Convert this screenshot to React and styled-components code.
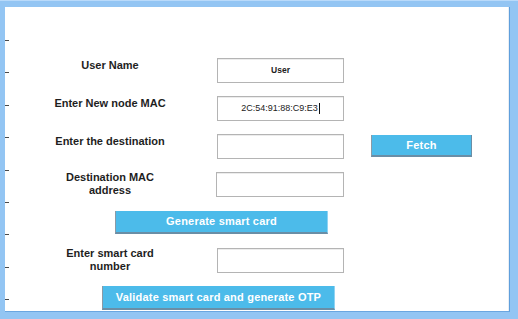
import React from "react";
import styled, { createGlobalStyle } from "styled-components";

const Global = createGlobalStyle`
  html, body { margin: 0; padding: 0; background: #ffffff; }
  body { font-family: "Liberation Sans", Arial, sans-serif; }
`;

const Frame = styled.div`
  width: 518px;
  height: 319px;
  box-sizing: border-box;
  background: #93c5f3;
  padding: 6px 8px 7px 5px;
  display: flex;
  border-top: 1px solid #b9dafa;
`;

const Panel = styled.div`
  flex: 1;
  background: #ffffff;
  display: flex;
  box-shadow: inset -1px 0 0 #e8eef5;
  border-right: 1px solid #5f9fdc;
  border-bottom: 1px solid #6aa6e0;
`;

const Ruler = styled.div`
  width: 4px;
  display: flex;
  flex-direction: column;
  gap: 31.4px;
  padding-top: 33px;
`;

const Tick = styled.span`
  display: block;
  height: 1px;
  width: 4px;
  background: #4a4a4a;
`;

const Form = styled.div`
  flex: 1;
  display: flex;
  flex-direction: column;
  gap: 12px;
  padding: 50px 0 0 21px;
`;

const Row = styled.div`
  display: grid;
  grid-template-columns: 160px 127px 101px;
  column-gap: 27px;
  height: 26px;
  align-items: center;
`;

const Label = styled.div`
  align-self: start;
  padding-top: ${(p) => (p.$multi ? "0" : "2px")};
  text-align: center;
  font-size: 11px;
  line-height: 13px;
  font-weight: bold;
  color: #1e1e1e;
`;

const Box = styled.div`
  height: 25px;
  box-sizing: border-box;
  border: 1px solid #b4b4b4;
  box-shadow: inset 0 1px 0 #ececec;
  background: #fff;
  display: flex;
  align-items: center;
  justify-content: center;
  font-size: ${(p) => (p.$bold ? "8.5px" : "9px")};
  font-weight: ${(p) => (p.$bold ? "bold" : "normal")};
  color: #222;
  margin-left: ${(p) => (p.$shift ? "-1px" : "0")};
`;

const Caret = styled.span`
  display: inline-block;
  width: 1px;
  height: 11px;
  background: #111;
  margin-left: 1px;
`;

const Button = styled.div`
  box-sizing: border-box;
  height: ${(p) => p.$h || 23}px;
  width: ${(p) => p.$w}px;
  margin-left: ${(p) => p.$indent || 0}px;
  background: #4cbbea;
  border-left: 1px solid #8a9aa6;
  border-bottom: 2px solid #6a8ea6;
  border-right: ${(p) => (p.$edge ? "1px solid #6a8ea6" : "1px solid #8fd3f3")};
  color: #ffffff;
  font-size: 11px;
  letter-spacing: 0.2px;
  font-weight: bold;
  display: flex;
  align-items: center;
  justify-content: center;
`;

const ButtonRow = styled.div`
  height: 26px;
  display: flex;
  align-items: center;
`;

export default function App() {
  const ticks = Array.from({ length: 9 });
  return (
    <>
      <Global />
      <Frame>
        <Panel>
          <Ruler>
            {ticks.map((_, i) => (
              <Tick key={i} />
            ))}
          </Ruler>
          <Form>
            <Row>
              <Label>User Name</Label>
              <Box $bold>User</Box>
            </Row>
            <Row>
              <Label>Enter New node MAC</Label>
              <Box>
                2C:54:91:88:C9:E3
                <Caret />
              </Box>
            </Row>
            <Row>
              <Label>Enter the destination</Label>
              <Box />
              <Button $w={101} $h={22} $edge>
                Fetch
              </Button>
            </Row>
            <Row>
              <Label $multi>
                Destination MAC
                <br />
                address
              </Label>
              <Box $shift />
            </Row>
            <ButtonRow>
              <Button $w={213} $indent={85}>
                Generate smart card
              </Button>
            </ButtonRow>
            <Row>
              <Label $multi>
                Enter smart card
                <br />
                number
              </Label>
              <Box />
            </Row>
            <ButtonRow>
              <Button $w={233} $h={24} $indent={72}>
                Validate smart card and generate OTP
              </Button>
            </ButtonRow>
          </Form>
        </Panel>
      </Frame>
    </>
  );
}
